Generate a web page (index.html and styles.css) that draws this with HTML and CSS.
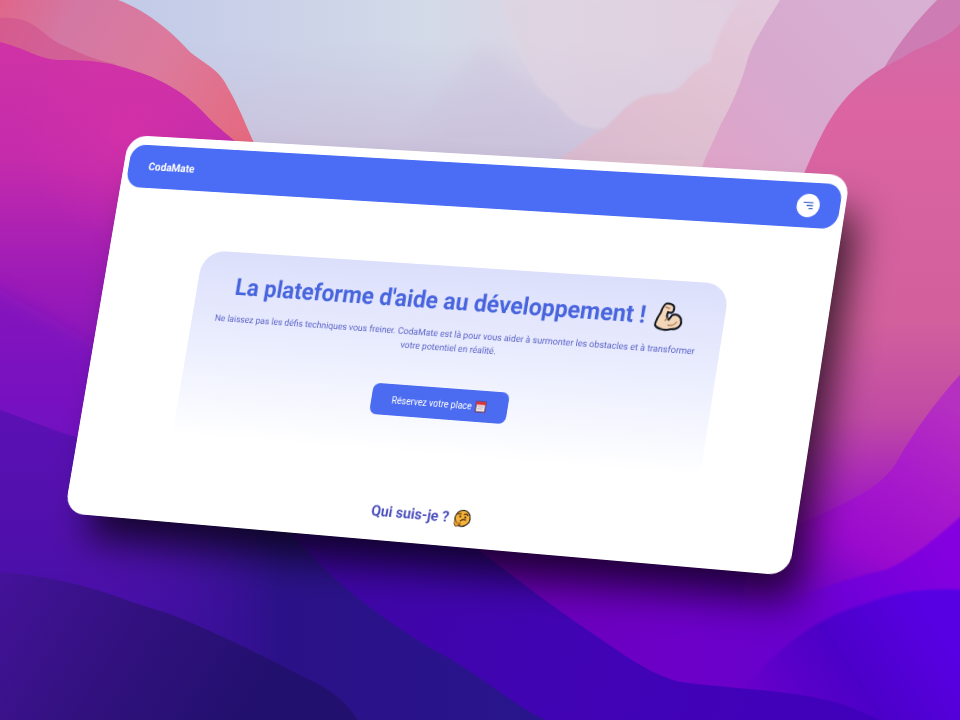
FILE: index.html
```html
<!DOCTYPE html>
<html lang="fr">
<head>
<meta charset="utf-8">
<meta name="viewport" content="width=device-width, initial-scale=1">
<title>CodaMate</title>
<link rel="stylesheet" href="styles.css">
</head>
<body>
<svg class="wallpaper" viewBox="0 0 960 720" preserveAspectRatio="xMidYMid slice" aria-hidden="true">
  <defs>
    <linearGradient id="sky" x1="0" y1="0" x2="1" y2="0">
      <stop offset=".15" stop-color="#c4cbe8"/><stop offset=".45" stop-color="#d3dae8"/><stop offset=".62" stop-color="#e0d3e1"/><stop offset=".8" stop-color="#e2c6dc"/>
    </linearGradient>
    <linearGradient id="haze" x1="0" y1="0" x2="0" y2="1"><stop offset="0" stop-color="#c9c2de" stop-opacity="0"/><stop offset="1" stop-color="#cbc1db"/></linearGradient>
    <linearGradient id="peach" x1="0" y1="1" x2="1" y2="0"><stop offset="0" stop-color="#dcb6ca"/><stop offset=".5" stop-color="#e3c0cf"/><stop offset="1" stop-color="#e2cde0"/></linearGradient>
    <linearGradient id="lilac" x1="700" y1="180" x2="880" y2="0" gradientUnits="userSpaceOnUse"><stop offset="0" stop-color="#e0a3c8"/><stop offset=".55" stop-color="#d7a9cf"/><stop offset="1" stop-color="#d8b0d3"/></linearGradient>
    <linearGradient id="rose" x1="0" y1="24" x2="0" y2="620" gradientUnits="userSpaceOnUse"><stop offset="0" stop-color="#d16aa6"/><stop offset=".14" stop-color="#dc64a3"/><stop offset=".5" stop-color="#d2609d"/><stop offset=".66" stop-color="#c04aa4"/><stop offset=".84" stop-color="#9a10c8"/><stop offset="1" stop-color="#7800c8" stop-opacity="0"/></linearGradient>
    <linearGradient id="coral" x1="0" y1="0" x2="250" y2="140" gradientUnits="userSpaceOnUse"><stop offset="0" stop-color="#e0668a"/><stop offset=".25" stop-color="#d378a4"/><stop offset=".6" stop-color="#dc7a9c"/><stop offset="1" stop-color="#e5697f"/></linearGradient>
    <linearGradient id="magenta" x1="0" y1="40" x2="0" y2="440" gradientUnits="userSpaceOnUse"><stop offset="0" stop-color="#d033a5"/><stop offset=".3" stop-color="#c42bac"/><stop offset=".6" stop-color="#9c1bb7"/><stop offset="1" stop-color="#7713bf"/></linearGradient>
    <radialGradient id="glow" cx="130" cy="130" r="110" gradientUnits="userSpaceOnUse"><stop offset="0" stop-color="#d832a6" stop-opacity=".6"/><stop offset="1" stop-color="#d832a6" stop-opacity="0"/></radialGradient>
    <linearGradient id="violet" x1="0" y1="400" x2="0" y2="640" gradientUnits="userSpaceOnUse"><stop offset="0" stop-color="#5d10b5"/><stop offset="1" stop-color="#450fa5"/></linearGradient>
    <linearGradient id="indigo" x1="0" y1="570" x2="240" y2="720" gradientUnits="userSpaceOnUse"><stop offset="0" stop-color="#441299"/><stop offset=".5" stop-color="#32117f"/><stop offset="1" stop-color="#22106e"/></linearGradient>
    <linearGradient id="navy" x1="90" y1="0" x2="540" y2="0" gradientUnits="userSpaceOnUse"><stop offset="0" stop-color="#4510a5" stop-opacity="0"/><stop offset=".42" stop-color="#2b1188"/><stop offset="1" stop-color="#28158c"/></linearGradient>
    <linearGradient id="ultra" x1="290" y1="520" x2="880" y2="720" gradientUnits="userSpaceOnUse"><stop offset="0" stop-color="#3d06a0"/><stop offset=".5" stop-color="#4104b4"/><stop offset="1" stop-color="#4000bb"/></linearGradient>
    <linearGradient id="purple" x1="500" y1="0" x2="960" y2="0" gradientUnits="userSpaceOnUse"><stop offset="0" stop-color="#6a00b6"/><stop offset=".4" stop-color="#6c00c8"/><stop offset="1" stop-color="#6200d4"/></linearGradient>
    <linearGradient id="orchid" x1="940" y1="400" x2="800" y2="640" gradientUnits="userSpaceOnUse"><stop offset="0" stop-color="#b52fc1"/><stop offset=".3" stop-color="#a81acb"/><stop offset=".6" stop-color="#9a0ace"/><stop offset=".95" stop-color="#7000c8" stop-opacity="0"/></linearGradient>
    <linearGradient id="electric" x1="770" y1="640" x2="940" y2="540" gradientUnits="userSpaceOnUse"><stop offset="0" stop-color="#6a00c8" stop-opacity="0"/><stop offset=".45" stop-color="#6f00d8"/><stop offset="1" stop-color="#8404e0"/></linearGradient>
    <linearGradient id="blue" x1="760" y1="720" x2="930" y2="610" gradientUnits="userSpaceOnUse"><stop offset="0" stop-color="#4a00c0" stop-opacity="0"/><stop offset=".5" stop-color="#4c00c8"/><stop offset="1" stop-color="#5800e4"/></linearGradient>
    <filter id="soft" x="-30%" y="-30%" width="160%" height="160%"><feGaussianBlur stdDeviation="9"/></filter>
    <filter id="edge" x="-10%" y="-10%" width="120%" height="120%"><feGaussianBlur stdDeviation="1"/></filter>
  </defs>
  <rect width="960" height="720" fill="url(#sky)"/>
  <rect y="40" width="960" height="120" fill="url(#haze)"/>
  <path d="M485 45C505 55 515 80 532 90C550 98 555 120 565 160H400Q440 90 485 45Z" fill="#c9bfdb" opacity=".3" filter="url(#soft)"/>
  <path d="M500 0H745C735 10 722 20 712 62C680 75 690 94 655 94C630 97 620 115 605 128Q575 132 556 102C535 92 520 60 500 0Z" fill="#e0d4e2" opacity=".6" filter="url(#edge)"/>
  <path d="M540 170C570 155 590 135 605 128C620 115 630 97 655 94C690 94 680 75 710 62C722 20 735 10 745 -10H800V200H540Z" fill="url(#peach)" opacity=".8" filter="url(#edge)"/>
  <path d="M780 0C765 25 755 38 748 58C742 82 732 104 720 126C710 150 702 160 700 180H960V0Z" fill="url(#lilac)"/>
  <path d="M937 0C915 22 897 45 884 68L830 200H960V0Z" fill="#cd7db4"/>
  <path d="M400 380H960V720H400Z" fill="url(#purple)"/>
  <path d="M960 24C942 43 918 46 902 58C880 68 860 82 846 98C824 123 815 150 801 180L740 620H960Z" fill="url(#rose)"/>
  <path d="M970 364C935 400 910 438 895 465C870 500 820 515 680 570V680H970Z" fill="url(#orchid)"/>
  <path d="M970 508C935 540 910 560 885 570C840 580 800 595 720 630V740H970Z" fill="url(#electric)" filter="url(#edge)"/>
  <path d="M700 740C760 665 800 622 865 604C900 590 930 588 970 590V740Z" fill="url(#blue)" filter="url(#edge)"/>
  <path d="M0 0H118C150 12 175 35 190 52C205 64 220 70 228 88C240 108 246 127 262 160V720H0Z" fill="url(#coral)"/>
  <path d="M0 18C35 16 40 34 60 44C85 55 95 60 115 64L130 90H0Z" fill="#d1538f" opacity=".65"/>
  <path d="M0 42C25 48 40 60 60 60C90 60 110 62 135 71C165 80 190 97 205 114C222 132 232 137 244 150V720H0Z" fill="url(#magenta)"/>
  <path d="M0 42C25 48 40 60 60 60C90 60 110 62 135 71C165 80 190 97 205 114C222 132 232 137 244 150V260H0Z" fill="url(#glow)"/>
  <path d="M-40 270C40 310 75 335 160 380V500H-40Z" fill="#6a10c5" opacity=".4" filter="url(#soft)"/>
  <path d="M0 410C30 420 50 430 80 438L360 510V720H0Z" fill="url(#violet)"/>
  <path d="M285 500L460 535C510 575 550 604 580 625C620 652 648 674 680 682C740 690 805 690 850 707L880 720H520L360 640L285 560Z" fill="url(#ultra)"/>
  <path d="M90 510L285 525C325 578 380 617 430 648C475 670 505 700 545 720H90Z" fill="url(#navy)"/>
  <path d="M-60 570C75 570 110 598 165 612C235 640 275 663 320 685C345 700 355 710 380 760H-60Z" fill="url(#indigo)"/>
</svg>

<div class="stage">
  <div class="card">
    <header class="navbar">
      <a class="brand" href="#">CodaMate</a>
      <button class="menu" type="button" aria-label="Menu">
        <svg viewBox="0 0 24 24" aria-hidden="true"><path d="M6 8.500H18M10 12H18M13 15.500H18"/></svg>
      </button>
    </header>
    <main>
      <section class="hero">
        <h1>La plateforme d'aide au développement !
          <svg class="arm" viewBox="0 0 32 32" aria-hidden="true">
            <path d="M11 2C8 3 7 8 6 12C4 17 1 22 2 26C5 30 14 31 20 29C27 29 31 25 30 20C29 14 24 12 19 14L16 19C13 17 13 14 14 11C17 12 20 12 20 8C21 4 17 1 11 2Z" fill="#f4d6b9" stroke="#171b22" stroke-width="2.200" stroke-linejoin="round"/>
            <path d="M11 6L15 7M15 17L12 20M16 25Q22 26 25 21" fill="none" stroke="#a97857" stroke-width="1.300" stroke-linecap="round"/>
          </svg>
        </h1>
        <p>Ne laissez pas les défis techniques vous freiner. CodaMate est là pour vous aider à surmonter les obstacles et à transformer votre potentiel en réalité.</p>
        <button class="reserve" type="button">Réservez votre place
          <svg class="calendar" viewBox="0 0 12 12" aria-hidden="true">
            <path d="M1 1H11V11H1Z" fill="#eee4e8" stroke="#70333e"/>
            <path d="M1 1H11V4H1Z" fill="#d8363c"/><path d="M3 6H9M3 8H8" stroke="#b9b2c2"/>
          </svg>
        </button>
      </section>
      <h2>Qui suis-je ?
        <svg class="face" viewBox="0 0 24 24" aria-hidden="true">
          <circle cx="12.500" cy="12" r="10.300" fill="#f5b338" stroke="#30251b" stroke-width="1.600"/>
          <path d="M6 7L10 6M14 7Q17 5 19 8" fill="none" stroke="#4b2c16" stroke-width="1.400" stroke-linecap="round"/>
          <circle cx="9" cy="10" r="1.300" fill="#352316"/><circle cx="16" cy="10.500" r="1.300" fill="#352316"/>
          <path d="M10 15.500Q13 12.500 17 14" fill="none" stroke="#4b2c16" stroke-width="1.500" stroke-linecap="round"/>
          <path d="M2.500 15Q4 14 5 18L10 18Q11 20 8 20.500Q8 23 5 23Q1 21 2.500 15Z" fill="#f0a52e" stroke="#4b3018" stroke-width=".8"/>
        </svg>
      </h2>
    </main>
  </div>
</div>
</body>
</html>
```
FILE: styles.css
```css
* { box-sizing: border-box; }

body {
  margin: 0;
  min-height: 100vh;
  overflow: hidden;
  font-family: Roboto, "Liberation Sans", sans-serif;
  text-rendering: geometricPrecision;
  background: #4a0fa8;
}

.wallpaper {
  position: fixed;
  inset: 0;
  width: 100%;
  height: 100%;
  z-index: -1;
}

.stage {
  min-height: 100vh;
  display: grid;
  place-items: center;
}

/* The window is shown tilted in perspective. */
.card {
  width: 86.25%;
  aspect-ratio: 828 / 424;
  padding: 10px 6px 0;
  border-radius: 22px;
  background: #fff;
  box-shadow: 22px 32px 44px -8px rgba(0, 0, 0, .75);
  transform-origin: 0 0;
  transform: matrix3d(.81952, .04698, 0, -.00006595, -.1521, .88418, 0, -.00002009, 0, 0, 1, 0, 63, -13, 0, 1);
}

.navbar {
  display: flex;
  align-items: center;
  justify-content: space-between;
  height: 48px;
  padding: 0 22px 0 24px;
  border-radius: 17px;
  background: #4b6df5;
}

.brand {
  color: #fff;
  font-size: 12px;
  font-weight: 700;
  text-decoration: none;
}

.menu {
  display: grid;
  place-items: center;
  width: 25px;
  height: 25px;
  padding: 0;
  border: 0;
  border-radius: 50%;
  background: #fff;
}

.menu svg {
  width: 21px;
  height: 21px;
  fill: none;
  stroke: #4668c8;
  stroke-width: 1.5;
}

.hero {
  display: flex;
  flex-direction: column;
  align-items: center;
  width: 74%;
  height: 216px;
  margin: 65px auto 0;
  padding: 20px 24px 0;
  border-radius: 26px;
  background: linear-gradient(#dcdffb, #eceffe 50%, #fff 95%);
  text-align: center;
}

h1,
h2 {
  display: flex;
  align-items: center;
  justify-content: center;
  margin: 0;
  font-weight: 700;
}

h1 {
  gap: 10px;
  color: #4865dd;
  font-size: 26px;
  line-height: 38px;
  white-space: nowrap;
}

.arm { width: 32px; height: 32px; }

.hero p {
  margin: 9px 0 0;
  color: #5c63c8;
  font-size: 10px;
  line-height: 15px;
}

.reserve {
  display: flex;
  align-items: center;
  gap: 4px;
  height: 34px;
  margin-top: 35px;
  padding: 0 24px;
  border: 0;
  border-radius: 8px;
  background: #4b6bf0;
  color: #fff;
  font: 10px Roboto, "Liberation Sans", sans-serif;
  white-space: nowrap;
}

.calendar { width: 13px; height: 13px; }

h2 {
  gap: 5px;
  margin-top: 43px;
  color: #4d51bd;
  font-size: 16px;
  line-height: 22px;
}

.face { width: 20px; height: 20px; }
```
